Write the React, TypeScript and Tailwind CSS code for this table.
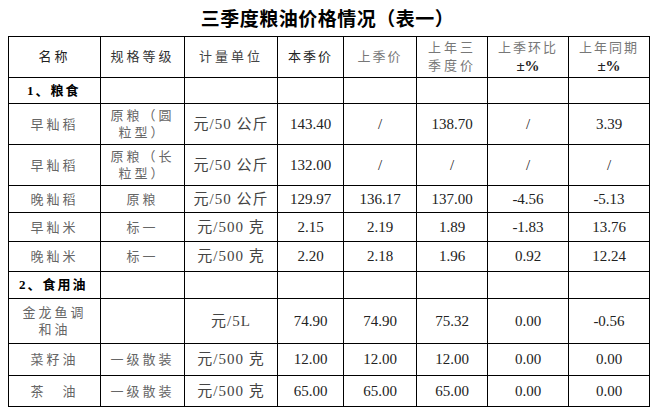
const CJK = '"Liberation Serif", "Noto Sans CJK SC", serif';

type Row = {
  cells: string[];
  h: number;
  section?: boolean;
  pad?: string;
};

const widths = [92, 84, 93, 66, 73, 71, 81, 81];

const rows: Row[] = [
  { cells: ['1、粮食', '', '', '', '', '', '', ''], h: 26, section: true, pad: 'pl-[18px]' },
  { cells: ['早籼稻', '原粮（圆\n粒型）', '元/50 公斤', '143.40', '/', '138.70', '/', '3.39'], h: 41 },
  { cells: ['早籼稻', '原粮（长\n粒型）', '元/50 公斤', '132.00', '/', '/', '/', '/'], h: 41 },
  { cells: ['晚籼稻', '原粮', '元/50 公斤', '129.97', '136.17', '137.00', '-4.56', '-5.13'], h: 27 },
  { cells: ['早籼米', '标一', '元/500 克', '2.15', '2.19', '1.89', '-1.83', '13.76'], h: 29 },
  { cells: ['晚籼米', '标一', '元/500 克', '2.20', '2.18', '1.96', '0.92', '12.24'], h: 30 },
  { cells: ['2、食用油', '', '', '', '', '', '', ''], h: 27, section: true, pad: 'pl-[10px]' },
  { cells: ['金龙鱼调\n和油', '', '元/5L', '74.90', '74.90', '75.32', '0.00', '-0.56'], h: 45 },
  { cells: ['菜籽油', '一级散装', '元/500 克', '12.00', '12.00', '12.00', '0.00', '0.00'], h: 32 },
  { cells: ['茶　油', '一级散装', '元/500 克', '65.00', '65.00', '65.00', '0.00', '0.00'], h: 31 },
];

function Cell({ text, col, section, pad }: { text: string; col: number; section?: boolean; pad?: string }) {
  if (section) {
    return (
      <td className={`border border-black ${pad} text-left text-[13px] font-bold tracking-[2px] text-black whitespace-nowrap`}>
        {text}
      </td>
    );
  }
  if (col >= 3) {
    return (
      <td className="border border-black text-center text-[15px] leading-[17px] text-[#222] whitespace-nowrap">
        {text}
      </td>
    );
  }
  if (col === 2) {
    return (
      <td className="border border-black text-center text-[15px] leading-[17px] tracking-[1px] text-[#444] whitespace-nowrap">
        {text}
      </td>
    );
  }
  return (
    <td className="border border-black text-center text-[13px] leading-[17px] tracking-[3px] text-[#666] whitespace-pre">
      {text}
    </td>
  );
}

export default function App() {
  return (
    <div className="w-[655px] h-[412px] bg-white" style={{ fontFamily: CJK }}>
      <div className="pt-[9px] h-[36px] text-center text-[19px] font-bold leading-[22px] tracking-[0.5px] text-black">
        三季度粮油价格情况（表一）
      </div>
      <table className="ml-[8px] border-collapse table-fixed w-[641px]">
        <colgroup>
          {widths.map((w, i) => (
            <col key={i} style={{ width: w }} />
          ))}
        </colgroup>
        <tbody>
          <tr className="h-[41px]">
            <td className="border border-black text-center text-[13px] tracking-[3px] text-[#222]">名称</td>
            <td className="border border-black text-center text-[13px] tracking-[3px] text-[#333]">规格等级</td>
            <td className="border border-black text-center text-[13px] tracking-[3px] text-[#444]">计量单位</td>
            <td className="border border-black text-center text-[13px] tracking-[2px] text-[#222]">本季价</td>
            <td className="border border-black text-center text-[13px] tracking-[2px] text-[#777]">上季价</td>
            <td className="border border-black text-center text-[13px] leading-[18px] tracking-[3px] text-[#777] whitespace-pre">
              {'上年三\n季度价'}
            </td>
            <td className="border border-black text-center text-[13px] leading-[18px] tracking-[2px] text-[#777]">
              上季环比
              <div className="font-bold text-[15px] text-[#222] tracking-normal">±%</div>
            </td>
            <td className="border border-black text-center text-[13px] leading-[18px] tracking-[2px] text-[#777]">
              上年同期
              <div className="font-bold text-[15px] text-[#222] tracking-normal">±%</div>
            </td>
          </tr>
          {rows.map((r, ri) => (
            <tr key={ri} style={{ height: r.h }}>
              {r.cells.map((c, ci) => (
                <Cell key={ci} text={c} col={ci} section={r.section && ci === 0} pad={r.pad} />
              ))}
            </tr>
          ))}
        </tbody>
      </table>
    </div>
  );
}
